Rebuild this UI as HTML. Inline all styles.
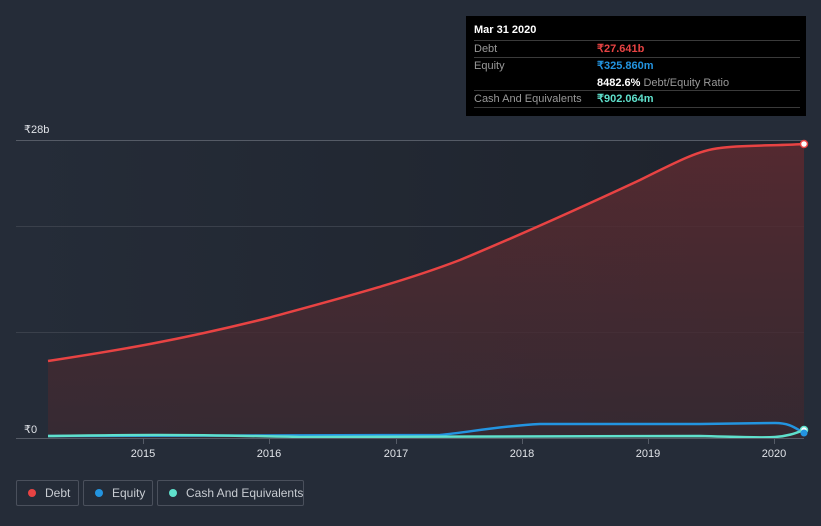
<!DOCTYPE html>
<html><head><meta charset="utf-8"><style>
body{margin:0;background:#252c38;width:821px;height:526px;overflow:hidden;font-family:"Liberation Sans",sans-serif;position:relative}
.tt{position:absolute;left:466px;top:16px;width:340px;height:100px;background:#000;color:#fff;font-size:11px}
.row{position:absolute;left:8px;right:6px;height:16px;line-height:16px;border-top:1px solid #3a3a3a;color:#999;white-space:nowrap}
.row span{position:absolute;left:123px;top:0;font-weight:bold}
.lg{position:absolute;top:480px;height:26px;border:1px solid #4a505c;border-radius:2px;color:#c8ccd2;font-size:12px;line-height:24px;box-sizing:border-box;white-space:nowrap}
.lg i{position:absolute;left:11px;top:8px;width:8px;height:8px;border-radius:50%}
.lg span{position:absolute;left:28px;top:0}
</style></head><body>
<svg width="821" height="526" style="position:absolute;left:0;top:0">
<defs><linearGradient id="g" x1="0" y1="0" x2="0" y2="1"><stop offset="0" stop-color="#5a2a30" stop-opacity=".9"/><stop offset="1" stop-color="#3a2a32" stop-opacity=".8"/></linearGradient>
<linearGradient id="bg" x1="0" y1="0" x2="1" y2="0"><stop offset="0" stop-color="#252c38"/><stop offset="1" stop-color="#1b1f27"/></linearGradient></defs>
<rect x="16" y="140" width="788" height="298" fill="url(#bg)" opacity=".7"/>
<g stroke="#3a404b" stroke-width="1"><line x1="16" y1="140.5" x2="804" y2="140.5" stroke="#555b66"/><line x1="16" y1="226.5" x2="804" y2="226.5"/><line x1="16" y1="332.5" x2="804" y2="332.5"/></g>
<path d="M48,361 C120,350 180,340 268,318 C330,301 400,283 460,260 C520,235 580,208 640,180 C680,160 700,150 720,148 C740,145 770,146 804,144 L804,438 L48,438Z" fill="url(#g)"/>
<path d="M48,361 C120,350 180,340 268,318 C330,301 400,283 460,260 C520,235 580,208 640,180 C680,160 700,150 720,148 C740,145 770,146 804,144" fill="none" stroke="#e84343" stroke-width="2.5"/>
<path d="M48,436 L440,435 C470,432 500,426 540,424 L700,424 L775,423 C790,423 795,428 804,433" fill="none" stroke="#2394e0" stroke-width="2.5"/>
<path d="M48,436 C120,435 170,434 300,437 L700,436 C740,437 760,438 775,437 C790,436 798,432 804,430" fill="none" stroke="#5fe0cc" stroke-width="2.5"/>
<line x1="16" y1="438.5" x2="804" y2="438.5" stroke="#555b66"/>
<g stroke="#555b66"><line x1="143.5" y1="439" x2="143.5" y2="444"/><line x1="269.5" y1="439" x2="269.5" y2="444"/><line x1="396.5" y1="439" x2="396.5" y2="444"/><line x1="522.5" y1="439" x2="522.5" y2="444"/><line x1="648.5" y1="439" x2="648.5" y2="444"/><line x1="774.5" y1="439" x2="774.5" y2="444"/></g>
<circle cx="804" cy="144" r="3.5" fill="#fff" stroke="#e84343" stroke-width="1.5"/>
<circle cx="804" cy="430" r="3.5" fill="#fff" stroke="#5fe0cc" stroke-width="1.5"/>
<circle cx="804" cy="433" r="3.5" fill="#2394e0"/>
<g fill="#e0e3e8" font-size="11" font-family="Liberation Sans,sans-serif"><text x="24" y="133">₹28b</text><text x="24" y="433">₹0</text>
<g text-anchor="middle"><text x="143" y="457">2015</text><text x="269" y="457">2016</text><text x="396" y="457">2017</text><text x="522" y="457">2018</text><text x="648" y="457">2019</text><text x="774" y="457">2020</text></g></g>
</svg>
<div class="tt">
<div style="position:absolute;left:8px;top:8px;font-weight:bold">Mar 31 2020</div>
<div class="row" style="top:24px">Debt<span style="color:#e84343">₹27.641b</span></div>
<div class="row" style="top:41px">Equity<span style="color:#2394e0">₹325.860m</span></div>
<div class="row" style="top:58px;border-top-color:transparent"><span style="color:#fff">8482.6% <b style="color:#999;font-weight:normal">Debt/Equity Ratio</b></span></div>
<div class="row" style="top:74px;border-bottom:1px solid #3a3a3a">Cash And Equivalents<span style="color:#5fe0cc">₹902.064m</span></div>
</div>
<div class="lg" style="left:16px;width:63px"><i style="background:#e84343"></i><span>Debt</span></div>
<div class="lg" style="left:83px;width:70px"><i style="background:#2394e0"></i><span>Equity</span></div>
<div class="lg" style="left:157px;width:147px"><i style="background:#5fe0cc"></i><span>Cash And Equivalents</span></div>
</body></html>
